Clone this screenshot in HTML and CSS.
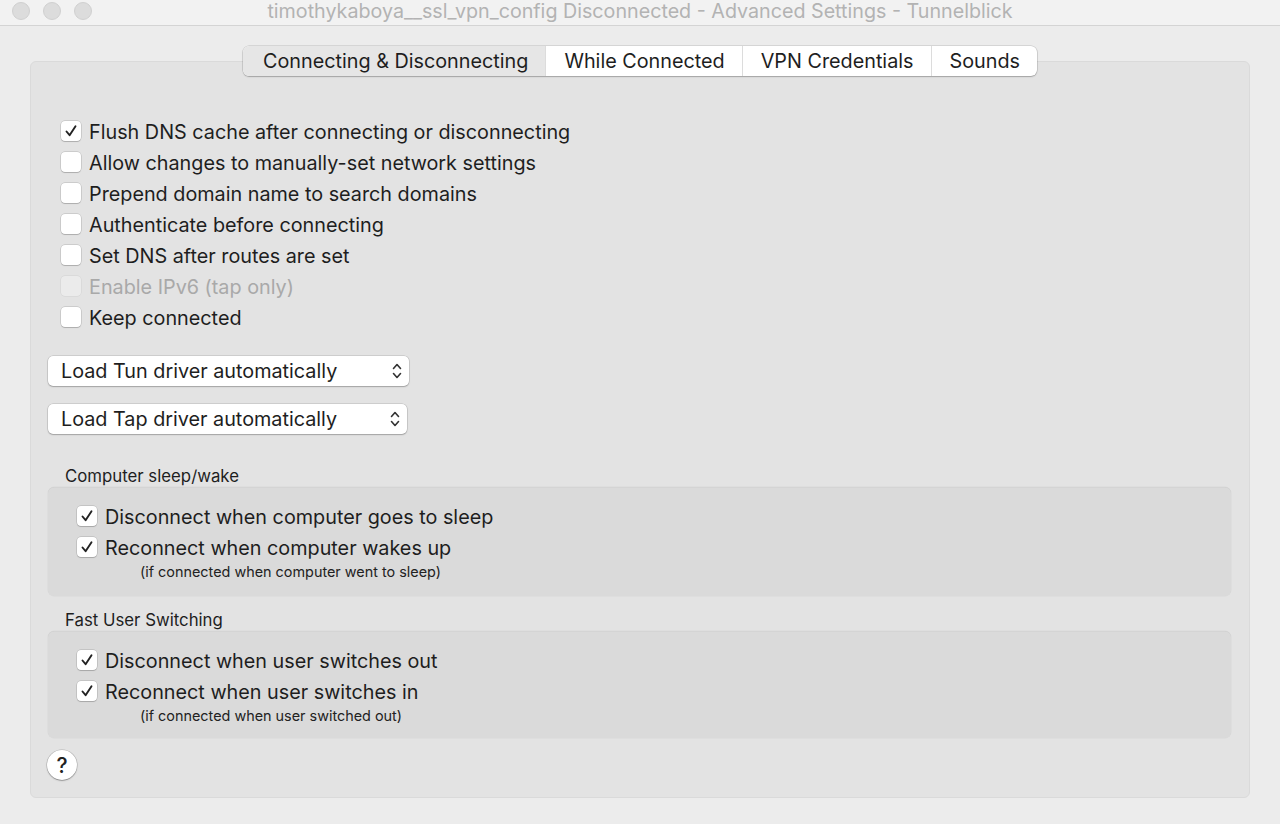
FILE: index.html
```html
<!DOCTYPE html>
<html>
<head>
<meta charset="utf-8">
<link rel="stylesheet" href="styles.css">
</head>
<body>
<div class="titlebar">
  <div class="lights"><span class="light"></span><span class="light"></span><span class="light"></span></div>
  <div class="title">timothykaboya__ssl_vpn_config Disconnected - Advanced Settings - Tunnelblick</div>
  <div></div>
</div>
<div class="content">
  <div class="tabs">
    <div class="tab selected">Connecting &amp; Disconnecting</div>
    <div class="tab">While Connected</div>
    <div class="tab">VPN Credentials</div>
    <div class="tab">Sounds</div>
  </div>
  <div class="panel">
    <div class="checks">
      <div class="row"><span class="box checked"><svg viewBox="0 0 20 20"><path d="M5.5 10.5 L8.6 14.2 L14.5 5.2" /></svg></span><span>Flush DNS cache after connecting or disconnecting</span></div>
      <div class="row"><span class="box"></span><span>Allow changes to manually-set network settings</span></div>
      <div class="row"><span class="box"></span><span>Prepend domain name to search domains</span></div>
      <div class="row"><span class="box"></span><span>Authenticate before connecting</span></div>
      <div class="row"><span class="box"></span><span>Set DNS after routes are set</span></div>
      <div class="row disabled"><span class="box"></span><span>Enable IPv6 (tap only)</span></div>
      <div class="row"><span class="box"></span><span>Keep connected</span></div>
    </div>
    <div class="popups">
      <div class="popup w1"><span>Load Tun driver automatically</span><svg class="arrows" viewBox="0 0 12 20"><path d="M2.5 7.5 L6 3.5 L9.5 7.5 M2.5 12.5 L6 16.5 L9.5 12.5"/></svg></div>
      <div class="popup w2"><span>Load Tap driver automatically</span><svg class="arrows" viewBox="0 0 12 20"><path d="M2.5 7.5 L6 3.5 L9.5 7.5 M2.5 12.5 L6 16.5 L9.5 12.5"/></svg></div>
    </div>
    <div class="group-label first">Computer sleep/wake</div>
    <div class="group">
      <div class="row"><span class="box checked"><svg viewBox="0 0 20 20"><path d="M5.5 10.5 L8.6 14.2 L14.5 5.2" /></svg></span><span>Disconnect when computer goes to sleep</span></div>
      <div class="row"><span class="box checked"><svg viewBox="0 0 20 20"><path d="M5.5 10.5 L8.6 14.2 L14.5 5.2" /></svg></span><span>Reconnect when computer wakes up</span></div>
      <div class="note">(if connected when computer went to sleep)</div>
    </div>
    <div class="group-label">Fast User Switching</div>
    <div class="group second">
      <div class="row"><span class="box checked"><svg viewBox="0 0 20 20"><path d="M5.5 10.5 L8.6 14.2 L14.5 5.2" /></svg></span><span>Disconnect when user switches out</span></div>
      <div class="row"><span class="box checked"><svg viewBox="0 0 20 20"><path d="M5.5 10.5 L8.6 14.2 L14.5 5.2" /></svg></span><span>Reconnect when user switches in</span></div>
      <div class="note">(if connected when user switched out)</div>
    </div>
    <div class="help">?</div>
  </div>
</div>
</body>
</html>
```
FILE: styles.css
```css
html, body {
  margin: 0;
  padding: 0;
  background: #ececec;
  font-family: Inter, "Liberation Sans", sans-serif;
  color: #262626;
}
.titlebar {
  height: 25px;
  border-bottom: 1px solid #d4d4d4;
  background: #f2f2f2;
  display: grid;
  grid-template-columns: 1fr auto 1fr;
  align-items: center;
}
.lights {
  display: flex;
  gap: 13px;
  padding-left: 12px;
  margin-top: -4px;
}
.light {
  width: 18px;
  height: 18px;
  border-radius: 50%;
  background: #dcdcdc;
  border: 0.5px solid #d0d0d0;
  box-sizing: border-box;
}
.title {
  font-size: 19.7px;
  color: #b3b3b3;
  margin-top: -4px;
  white-space: nowrap;
}
.content {
  padding: 20px 30px 26px;
}
.tabs {
  display: flex;
  position: relative;
  z-index: 1;
  margin-bottom: -15px;
  width: max-content;
  margin-left: auto;
  margin-right: auto;
  background: #fff;
  border-radius: 6px;
  box-shadow: 0 0 0 0.5px rgba(0,0,0,0.18), 0 1px 1.5px rgba(0,0,0,0.22);
  overflow: hidden;
}
.tab {
  height: 30px;
  line-height: 30px;
  font-size: 19.8px;
  padding: 0 17px 0 18px;
  border-left: 1px solid #dcdcdc;
  color: #1e1e1e;
}
.tab:first-child { border-left: none; padding-left: 20px; }
.tab.selected {
  background: #e6e6e6;
}
.panel {
  height: 737px;
  box-sizing: border-box;
  background: #e3e3e3;
  border: 1px solid #dadada;
  border-radius: 6px;
  padding: 54px 18px 0 17px;
}
.checks {
  padding-left: 13px;
  display: flex;
  flex-direction: column;
}
.row {
  height: 31px;
  display: flex;
  align-items: center;
  gap: 8px;
  font-size: 19.8px;
  color: #1e1e1e;
}
.row.disabled { color: #a9a9a9; }
.box {
  width: 20px;
  height: 20px;
  box-sizing: border-box;
  background: #fff;
  border-radius: 4px;
  box-shadow: 0 0 0 0.5px rgba(0,0,0,0.2), 0 1px 1px rgba(0,0,0,0.15);
  display: inline-block;
  flex: none;
  margin-top: -1px;
}
.row.disabled .box {
  background: #ebebeb;
  box-shadow: 0 0 0 0.5px rgba(0,0,0,0.08);
}
.box svg {
  width: 20px;
  height: 20px;
  display: block;
}
.box svg path {
  fill: none;
  stroke: #222;
  stroke-width: 1.9;
  stroke-linecap: round;
  stroke-linejoin: round;
}
.popups {
  margin-top: 23px;
  display: flex;
  flex-direction: column;
  gap: 18px;
}
.popup {
  height: 30px;
  box-sizing: border-box;
  background: #fff;
  border-radius: 5px;
  box-shadow: 0 0 0 0.5px rgba(0,0,0,0.18), 0 1px 1.5px rgba(0,0,0,0.22);
  display: flex;
  align-items: center;
  justify-content: space-between;
  padding: 0 6px 0 13px;
  font-size: 19.8px;
  color: #1e1e1e;
}
.popup.w1 { width: 361px; }
.popup.w2 { width: 359px; }
.arrows {
  width: 12px;
  height: 20px;
}
.arrows path {
  fill: none;
  stroke: #333;
  stroke-width: 1.6;
  stroke-linecap: round;
  stroke-linejoin: round;
}
.group-label {
  font-size: 16.8px;
  color: #1e1e1e;
  padding-left: 17px;
  height: 22px;
  line-height: 22px;
  margin-top: 13px;
}
.group-label.first { margin-top: 31px; }
.group {
  background: #dadada;
  border-radius: 6px;
  box-shadow: inset 0 0.5px 0 rgba(0,0,0,0.06), 0 0 0 0.5px rgba(0,0,0,0.04);
  padding: 14px 0 14px 29px;
  height: 109px;
  box-sizing: border-box;
}
.group.second { height: 107px; }
.note {
  font-size: 14.4px;
  color: #222;
  padding-left: 63px;
  margin-top: -1px;
  height: 20px;
  line-height: 20px;
}
.help {
  margin-top: 12px;
  width: 30px;
  height: 30px;
  border-radius: 50%;
  background: #fff;
  box-shadow: 0 0 0 0.5px rgba(0,0,0,0.22), 0 1px 1.5px rgba(0,0,0,0.25);
  display: flex;
  align-items: center;
  justify-content: center;
  font-size: 21px;
  font-weight: 500;
  color: #222;
  margin-left: -1px;
}
```
